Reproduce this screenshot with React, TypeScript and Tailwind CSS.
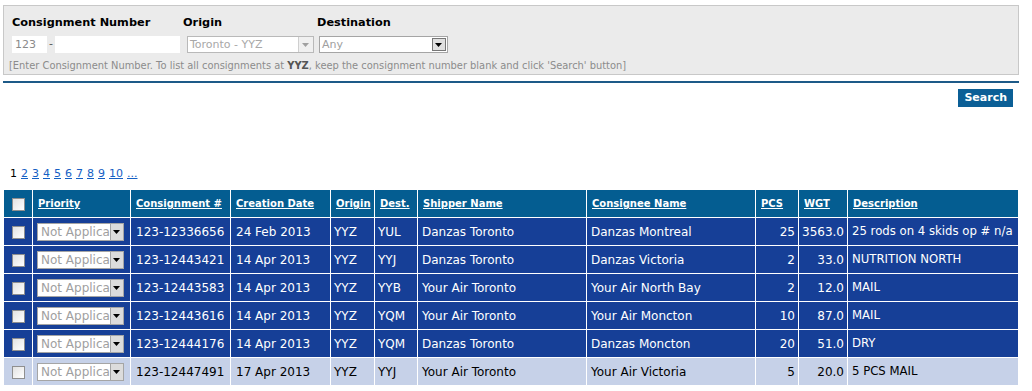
import React from "react";

const rows = [
  ["123-12336656", "24 Feb 2013", "YYZ", "YUL", "Danzas Toronto", "Danzas Montreal", "25", "3563.0", "25 rods on 4 skids op # n/a"],
  ["123-12443421", "14 Apr 2013", "YYZ", "YYJ", "Danzas Toronto", "Danzas Victoria", "2", "33.0", "NUTRITION NORTH"],
  ["123-12443583", "14 Apr 2013", "YYZ", "YYB", "Your Air Toronto", "Your Air North Bay", "2", "12.0", "MAIL"],
  ["123-12443616", "14 Apr 2013", "YYZ", "YQM", "Your Air Toronto", "Your Air Moncton", "10", "87.0", "MAIL"],
  ["123-12444176", "14 Apr 2013", "YYZ", "YQM", "Danzas Toronto", "Danzas Moncton", "20", "51.0", "DRY"],
  ["123-12447491", "17 Apr 2013", "YYZ", "YYJ", "Your Air Toronto", "Your Air Victoria", "5", "20.0", "5 PCS MAIL"],
];

function Check() {
  return (
    <span className="inline-block w-[13px] h-[13px] border border-[#8f8f8f] bg-gradient-to-br from-[#e2e2e2] to-[#ffffff] align-middle" />
  );
}

function Arrow({ dim }: { dim?: boolean }) {
  return (
    <svg width="7" height="4" viewBox="0 0 7 4">
      <path d="M0 0h7L3.5 4z" fill={dim ? "#a0a0a0" : "#000"} />
    </svg>
  );
}

function PrioritySelect() {
  return (
    <div className="flex h-[18px] w-[87px] border border-[#a5a5a5] bg-white">
      <span className="flex-1 whitespace-nowrap pl-[3px] text-[12px] leading-[16px] text-[#a0a0a0]">Not Applica</span>
      <span className="flex w-[16px] items-center justify-center border-l border-[#a5a5a5] bg-[#dcdcdc]">
        <Arrow />
      </span>
    </div>
  );
}

const headers = [
  { t: "Priority", w: "w-[98px]" },
  { t: "Consignment #", w: "w-[100px]" },
  { t: "Creation Date", w: "w-[100px]" },
  { t: "Origin", w: "w-[44px]" },
  { t: "Dest.", w: "w-[43px]" },
  { t: "Shipper Name", w: "w-[169px]" },
  { t: "Consignee Name", w: "w-[169px]" },
  { t: "PCS", w: "w-[43px]" },
  { t: "WGT", w: "w-[49px]" },
  { t: "Description", w: "" },
];

export default function App() {
  return (
    <div className="w-[1032px] h-[391px] overflow-hidden bg-white font-['DejaVu_Sans',Verdana,sans-serif] text-black">
      <div className="pl-[3px] pr-[13px] pt-[5px]">
        <div className="h-[70px] border border-[#c8c8c8] bg-[#ebebeb] pl-[8px] pt-[10px]">
          <div className="flex text-[11.3px] font-bold leading-[14px]">
            <span className="w-[171px]">Consignment Number</span>
            <span className="w-[134px]">Origin</span>
            <span>Destination</span>
          </div>
          <div className="mt-[6px] flex items-center">
            <div className="h-[17px] w-[35px] bg-white pl-[3px] text-[11px] leading-[17px] text-[#8a8a8a]">123</div>
            <span className="mx-[2px] text-[11px] text-[#555]">-</span>
            <div className="h-[17px] w-[125px] bg-white" />
            <div className="ml-[7px] flex h-[17px] w-[127px] border border-[#b9b9b9] bg-white">
              <span className="flex-1 pl-[2px] text-[11px] leading-[15px] text-[#a8a8a8]">Toronto - YYZ</span>
              <span className="flex w-[15px] items-center justify-center border-l border-[#cfcfcf] bg-[#f0f0f0]"><Arrow dim /></span>
            </div>
            <div className="ml-[5px] flex h-[17px] w-[129px] border border-[#a5a5a5] bg-white">
              <span className="flex-1 pl-[2px] text-[11px] leading-[15px] text-[#a0a0a0]">Any</span>
              <span className="my-[1px] mr-[1px] flex w-[14px] items-center justify-center border border-[#777] bg-[#e0e0e0]"><Arrow /></span>
            </div>
          </div>
          <div className="-ml-[3px] mt-[7px] text-[9.9px] leading-[12px] text-[#8c8c8c] whitespace-nowrap">
            [Enter Consignment Number. To list all consignments at <b className="text-[#555]">YYZ</b>, keep the consignment number blank and click 'Search' button]
          </div>
        </div>
        <div className="mt-[6px] h-[2px] bg-[#1d5a88]" />
        <div className="mt-[6px] flex justify-end pr-[6px]">
          <button className="h-[18px] bg-[#0b5f96] px-[6px] text-[11px] font-bold leading-[18px] text-white">Search</button>
        </div>
        <div className="mt-[60px] flex gap-[4px] pl-[7px] text-[11px] leading-[14px]">
          <span>1</span>
          {["2", "3", "4", "5", "6", "7", "8", "9", "10", "..."].map((n) => (
            <a key={n} className="text-[#1560c4] underline">{n}</a>
          ))}
        </div>
        <table className="mt-[8px] w-[1016px] border-collapse table-fixed">
          <thead>
            <tr className="h-[28px] bg-[#045d91] text-white">
              <th className="w-[29px] border border-white text-center"><Check /></th>
              {headers.map((h) => (
                <th key={h.t} className={`${h.w} border border-white px-[5px] text-left text-[10px] font-bold underline whitespace-nowrap`}>{h.t}</th>
              ))}
            </tr>
          </thead>
          <tbody className="text-[12px]">
            {rows.map((r, i) => {
              const light = i === 5;
              return (
                <tr key={i} className={`h-[28px] ${light ? "bg-[#c6d1e8] text-black" : "bg-[#163f97] text-white"}`}>
                  <td className="border border-white text-center"><Check /></td>
                  <td className="border border-white px-[4px]"><PrioritySelect /></td>
                  <td className="border border-white px-[5px] whitespace-nowrap">{r[0]}</td>
                  <td className="border border-white px-[5px] whitespace-nowrap">{r[1]}</td>
                  <td className="border border-white px-[3px] whitespace-nowrap">{r[2]}</td>
                  <td className="border border-white px-[3px] whitespace-nowrap">{r[3]}</td>
                  <td className="border border-white px-[4px] whitespace-nowrap">{r[4]}</td>
                  <td className="border border-white px-[4px] whitespace-nowrap">{r[5]}</td>
                  <td className="border border-white px-[3px] text-right whitespace-nowrap">{r[6]}</td>
                  <td className="border border-white px-[3px] text-right whitespace-nowrap">{r[7]}</td>
                  <td className="border border-white px-[4px] whitespace-nowrap text-[11.7px]">{r[8]}</td>
                </tr>
              );
            })}
          </tbody>
        </table>
      </div>
    </div>
  );
}
